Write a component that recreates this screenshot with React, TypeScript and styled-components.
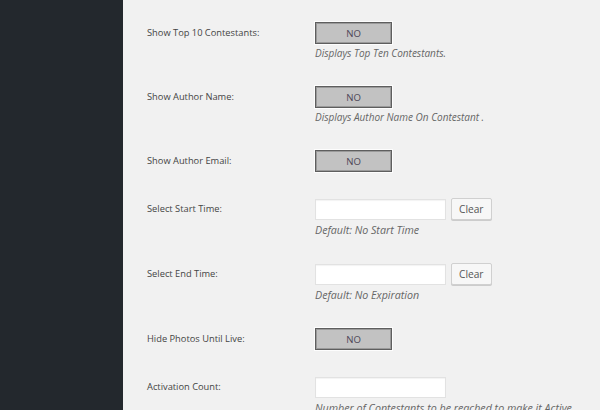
import React from "react";
import styled, { createGlobalStyle } from "styled-components";

const GlobalStyle = createGlobalStyle`
    html, body {
        margin: 0;
        padding: 0;
        background: #f1f1f1;
        overflow: hidden;
    }
`;

const Page = styled.div`
    display: flex;
    width: 600px;
    height: 410px;
    overflow: hidden;
    font-family: "Open Sans", "Liberation Sans", sans-serif;
    font-size: 9.3px;
`;

const Sidebar = styled.div`
    width: 123px;
    flex-shrink: 0;
    background: #23282d;
`;

const Content = styled.div`
    flex: 1;
    background: #f1f1f1;
    padding: 9px 0 0 24px;
`;

const FormTable = styled.div`
    display: grid;
    grid-template-columns: 168px 1fr;
`;

const Label = styled.div`
    padding: 13px 0;
    line-height: 22px;
    color: #444;
    white-space: nowrap;
`;

const Field = styled.div`
    padding: 13px 0;
`;

const Controls = styled.div`
    display: flex;
    align-items: center;
    gap: 5px;
    height: 22px;
`;

const Toggle = styled.div`
    box-sizing: border-box;
    width: 77px;
    height: 22px;
    display: flex;
    align-items: center;
    justify-content: center;
    background: #c2c2c2;
    border: 1px solid #5e5e5e;
    box-shadow: 0 0 0 1px #fdfdfd, inset 0 0 0 1px #9a9a9a;
    color: #4d4657;
    font-size: 9.6px;
`;

const TextInput = styled.input`
    box-sizing: border-box;
    width: 131px;
    height: 21px;
    margin: 0;
    padding: 0 5px;
    background: #fff;
    border: 1px solid #e2e2e2;
    box-shadow: inset 0 1px 1px rgba(0, 0, 0, 0.05);
    font-family: inherit;
    font-size: 9.3px;
    outline: none;
`;

const ClearButton = styled.button`
    box-sizing: border-box;
    height: 22px;
    padding: 0 7px;
    margin: 0;
    background: #f7f7f7;
    border: 1px solid #d0d0d0;
    border-radius: 2px;
    box-shadow: 0 1px 0 #ccc;
    color: #555;
    font-family: inherit;
    font-size: 10.2px;
`;

const Description = styled.div<{ $large?: boolean }>`
    margin-top: ${({ $large }) => ($large ? 4 : 3)}px;
    line-height: 13px;
    color: #666;
    font-style: italic;
    font-size: ${({ $large }) => ($large ? 10.7 : 10)}px;
    white-space: nowrap;
`;

type Row = {
    label: string;
    kind: "toggle" | "time" | "text";
    description?: string;
};

const rows: Row[] = [
    { label: "Show Top 10 Contestants:", kind: "toggle", description: "Displays Top Ten Contestants." },
    { label: "Show Author Name:", kind: "toggle", description: "Displays Author Name On Contestant ." },
    { label: "Show Author Email:", kind: "toggle" },
    { label: "Select Start Time:", kind: "time", description: "Default: No Start Time" },
    { label: "Select End Time:", kind: "time", description: "Default: No Expiration" },
    { label: "Hide Photos Until Live:", kind: "toggle" },
    { label: "Activation Count:", kind: "text", description: "Number of Contestants to be reached to make it Active" },
];

export default function App() {
    return (
        <>
            <GlobalStyle />
            <Page>
                <Sidebar />
                <Content>
                    <FormTable>
                        {rows.map((row) => (
                            <React.Fragment key={row.label}>
                                <Label>{row.label}</Label>
                                <Field>
                                    <Controls>
                                        {row.kind === "toggle" && <Toggle>NO</Toggle>}
                                        {row.kind !== "toggle" && <TextInput type="text" />}
                                        {row.kind === "time" && <ClearButton>Clear</ClearButton>}
                                    </Controls>
                                    {row.description && (
                                        <Description $large={row.kind !== "toggle"}>{row.description}</Description>
                                    )}
                                </Field>
                            </React.Fragment>
                        ))}
                    </FormTable>
                </Content>
            </Page>
        </>
    );
}
